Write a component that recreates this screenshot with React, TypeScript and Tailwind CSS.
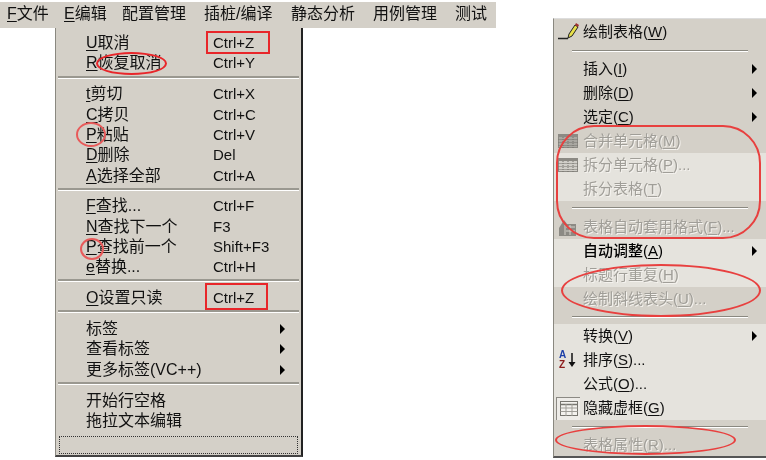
import React from "react";

const font = "font-['Liberation_Sans','Noto_Sans_CJK_SC',sans-serif]";

const menuBar = [
  { key: "F", label: "文件", className: "w-[56px] pl-[7px]" },
  { key: "E", label: "编辑", className: "w-[59px] pl-[8px]" },
  { key: "", label: "配置管理", className: "w-[82px] pl-[7px]" },
  { key: "", label: "插桩/编译", className: "w-[88px] pl-[7px]" },
  { key: "", label: "静态分析", className: "w-[82px] pl-[6px]" },
  { key: "", label: "用例管理", className: "w-[82px] pl-[6px]" },
  { key: "", label: "测试", className: "w-[47px] pl-[6px]" },
];

type LeftItem = { key?: string; label?: string; shortcut?: string; arrow?: boolean; sep?: boolean };

const leftItems: LeftItem[] = [
  { key: "U", label: "取消", shortcut: "Ctrl+Z" },
  { key: "R", label: "恢复取消", shortcut: "Ctrl+Y" },
  { sep: true },
  { key: "t", label: "剪切", shortcut: "Ctrl+X" },
  { key: "C", label: "拷贝", shortcut: "Ctrl+C" },
  { key: "P", label: "粘贴", shortcut: "Ctrl+V" },
  { key: "D", label: "删除", shortcut: "Del" },
  { key: "A", label: "选择全部", shortcut: "Ctrl+A" },
  { sep: true },
  { key: "F", label: "查找...", shortcut: "Ctrl+F" },
  { key: "N", label: "查找下一个", shortcut: "F3" },
  { key: "P", label: "查找前一个", shortcut: "Shift+F3" },
  { key: "e", label: "替换...", shortcut: "Ctrl+H" },
  { sep: true },
  { key: "O", label: "设置只读", shortcut: "Ctrl+Z" },
  { sep: true },
  { label: "标签", arrow: true },
  { label: "查看标签", arrow: true },
  { label: "更多标签(VC++)", arrow: true },
  { sep: true },
  { label: "开始行空格" },
  { label: "拖拉文本编辑" },
];

function Arrow() {
  return <span className="h-0 w-0 border-y-[5px] border-l-[5px] border-y-transparent border-l-black" />;
}

function LeftMenu() {
  return (
    <div className="ml-[55px] flex h-[429px] w-[248px] flex-col border-l border-l-[#8a8880] border-r-2 border-r-[#222] border-b-2 border-b-[#444] bg-[#d4d0c8] pt-[5px] text-[16px] leading-[20px] text-[#111]">
      {leftItems.map((item, i) =>
        item.sep ? (
          <div key={i} className="mx-[2px] mt-[2px] mb-[5.6px] h-[3px] shrink-0 border-t-2 border-t-[#9a9890] border-b border-b-white" />
        ) : (
          <div key={i} className="flex h-[20.3px] shrink-0 items-center pl-[30px]">
            <span className="w-[127px] whitespace-nowrap">
              {item.key && <span className="underline underline-offset-2">{item.key}</span>}
              {item.label}
            </span>
            <span className="w-[67px] whitespace-nowrap text-[15px]">{item.shortcut}</span>
            {item.arrow && <Arrow />}
          </div>
        )
      )}
      <div className="mx-[3px] mt-[5px] h-[18px] shrink-0 border border-dotted border-[#333]" />
    </div>
  );
}

function PencilIcon() {
  return (
    <svg width="22" height="20" viewBox="0 0 22 20">
      <path d="M0 16.5h10" stroke="#222" strokeWidth="1.5" />
      <path d="M10 16l1-4 6-9 3 2-6 9z" fill="#e8e04a" stroke="#222" strokeWidth="1" />
      <path d="M17 3l1-2 3 2-1 2z" fill="#a03030" />
    </svg>
  );
}

function GridIcon({ fill }: { fill: string }) {
  return (
    <svg width="20" height="14" viewBox="0 0 20 14">
      <rect x="0.5" y="0.5" width="19" height="13" fill={fill} stroke="#8c8a84" />
      <path d="M0.5 2h19" stroke="#8c8a84" strokeWidth="2" />
      <path d="M0.5 5.5h19M0.5 8.5h19M0.5 11.5h19M5 3v11M10 3v11M15 3v11" stroke="#77756f" strokeDasharray="1 1" />
    </svg>
  );
}

function AutoFormatIcon() {
  return (
    <svg width="20" height="18" viewBox="0 0 20 18">
      <path d="M1 10l5-8 3 4H18v12H1z" fill="#8c8a84" />
      <path d="M8 9h9M8 13h9M12 7v10M7 7v10" stroke="#d4d0c8" />
    </svg>
  );
}

function SortIcon() {
  return (
    <div className="flex h-full items-center gap-[2px] pl-[1px]">
      <div className="flex flex-col font-['Liberation_Sans',sans-serif] text-[10px] leading-[10px] font-bold">
        <span className="text-[#1c3fa8]">A</span>
        <span className="text-[#8c1c1c]">Z</span>
      </div>
      <svg width="8" height="18" viewBox="0 0 8 18">
        <path d="M4 2v11" stroke="#111" strokeWidth="1.5" />
        <path d="M0.5 11h7L4 16z" fill="#111" />
      </svg>
    </div>
  );
}

function TableIcon() {
  return (
    <div className="-ml-[2px] flex h-[23px] w-[24px] shrink-0 items-center justify-center border-t border-l border-[#8c8a84] bg-[#eeece8]">
      <svg width="18" height="15" viewBox="0 0 18 15">
        <rect x="0.5" y="0.5" width="17" height="14" fill="#f4f2ee" stroke="#77756f" />
        <path d="M0.5 3.5h17" stroke="#77756f" strokeWidth="1.5" />
        <path d="M0.5 7h17M0.5 10.5h17M6 3v12M12 3v12" stroke="#a09e98" />
      </svg>
    </div>
  );
}

type RightItem = {
  label?: string;
  hotkey?: string;
  suffix?: string;
  arrow?: boolean;
  disabled?: boolean;
  bold?: boolean;
  sep?: boolean;
  icon?: React.ReactNode;
  light?: boolean;
};

const rightItems: RightItem[] = [
  { label: "绘制表格", hotkey: "W", icon: <PencilIcon /> },
  { sep: true },
  { label: "插入", hotkey: "I", arrow: true },
  { label: "删除", hotkey: "D", arrow: true },
  { label: "选定", hotkey: "C", arrow: true },
  { label: "合并单元格", hotkey: "M", disabled: true, icon: <GridIcon fill="#aaa8a2" /> },
  { label: "拆分单元格", hotkey: "P", suffix: "...", disabled: true, light: true, icon: <GridIcon fill="#d0cec8" /> },
  { label: "拆分表格", hotkey: "T", disabled: true, light: true },
  { sep: true, light: true },
  { label: "表格自动套用格式", hotkey: "F", suffix: "...", disabled: true, icon: <AutoFormatIcon /> },
  { label: "自动调整", hotkey: "A", arrow: true, bold: true, light: true },
  { label: "标题行重复", hotkey: "H", disabled: true, light: true },
  { label: "绘制斜线表头", hotkey: "U", suffix: "...", disabled: true },
  { sep: true },
  { label: "转换", hotkey: "V", arrow: true, light: true },
  { label: "排序", hotkey: "S", suffix: "...", light: true, icon: <SortIcon /> },
  { label: "公式", hotkey: "O", suffix: "...", light: true },
  { label: "隐藏虚框", hotkey: "G", light: true, icon: <TableIcon /> },
  { sep: true },
  { label: "表格属性", hotkey: "R", suffix: "...", disabled: true },
];

function RightMenu() {
  return (
    <div className="mt-[18px] flex h-[440px] w-[213px] flex-col border-t border-t-[#ddd] border-l border-l-[#8a8880] border-b-2 border-b-[#555] bg-[#d4d0c8] pt-[1px] text-[15px] text-[#111]">
      {rightItems.map((item, i) =>
        item.sep ? (
          <div key={i} className="flex h-[13.4px] shrink-0 items-center pr-[18px] pl-[18px]">
            <div className="h-[2px] w-full border-t border-t-[#8a8880] border-b border-b-white" />
          </div>
        ) : (
          <div
            key={i}
            className={`flex h-[24px] shrink-0 items-center ${item.light ? "bg-[#e5e3dd]" : ""} ${
              item.disabled ? "text-[#a09e98] [text-shadow:1px_1px_0_#f4f2ee]" : ""
            } ${item.bold ? "font-medium text-black" : ""}`}
          >
            <span className="flex h-[24px] w-[29px] shrink-0 items-center pl-[4px]">{item.icon}</span>
            <span className="w-[169px] whitespace-nowrap">
              {item.label}(<span className="underline underline-offset-2">{item.hotkey}</span>){item.suffix}
            </span>
            {item.arrow && <Arrow />}
          </div>
        )
      )}
    </div>
  );
}

export default function App() {
  return (
    <div className={`relative flex h-[460px] w-[766px] overflow-hidden bg-white blur-[0.4px] ${font}`}>
      <div className="w-[553px] shrink-0 pt-[2px]">
        <div className="flex h-[26px] w-[496px] items-center bg-[#d4d0c8] pb-[2px] text-[16px] text-[#111]">
          {menuBar.map((m) => (
            <span key={m.label} className={`whitespace-nowrap ${m.className}`}>
              {m.key && <span className="underline underline-offset-2">{m.key}</span>}
              {m.label}
            </span>
          ))}
        </div>
        <LeftMenu />
      </div>
      <RightMenu />

      {/* red annotations drawn over the menus */}
      <div className="absolute top-[31px] left-[206px] h-[23px] w-[64px] border-2 border-[#e8262a]" />
      <div className="absolute top-[283px] left-[205px] h-[27px] w-[63px] border-2 border-[#e8262a]" />
      <div className="absolute top-[52px] left-[96px] h-[23px] w-[71px] rounded-[50%] border-2 border-[#e8262a]" />
      <div className="absolute top-[122px] left-[76px] h-[25px] w-[30px] rounded-[50%] border-2 border-[#e85a5a]" />
      <div className="absolute top-[238px] left-[80px] h-[22px] w-[24px] rounded-[50%] border-2 border-[#e85a5a]" />
      <div className="absolute top-[125px] left-[556px] h-[114px] w-[205px] rounded-[38px] border-2 border-[#e8403f]" />
      <div className="absolute top-[264px] left-[561px] h-[53px] w-[200px] rounded-[50%] border-2 border-[#e8403f]" />
      <div className="absolute top-[425px] left-[555px] h-[30px] w-[181px] rounded-[50%] border-2 border-[#e8403f]" />
    </div>
  );
}
